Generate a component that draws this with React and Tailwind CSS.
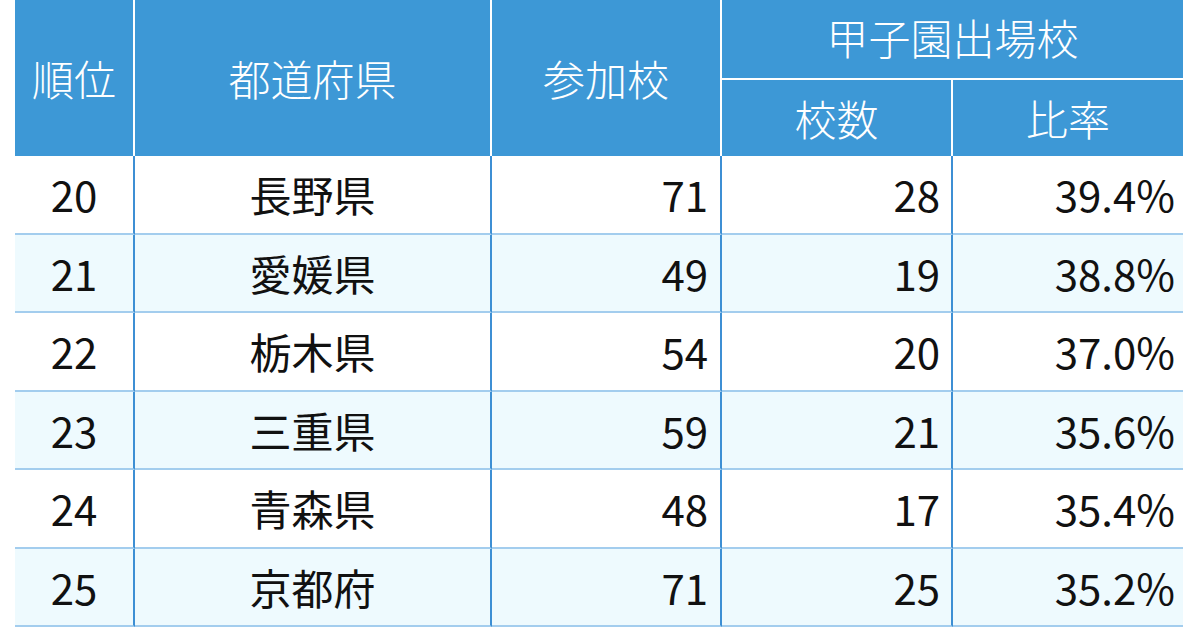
import React from "react";

const rows = [
  ["20", "長野県", "71", "28", "39.4%"],
  ["21", "愛媛県", "49", "19", "38.8%"],
  ["22", "栃木県", "54", "20", "37.0%"],
  ["23", "三重県", "59", "21", "35.6%"],
  ["24", "青森県", "48", "17", "35.4%"],
  ["25", "京都府", "71", "25", "35.2%"],
];

const App = () => {
  return (
    <div
      className="w-[1200px] h-[630px] bg-white overflow-hidden pl-[15px]"
      style={{ fontFamily: '"Noto Sans CJK JP", "Noto Sans", sans-serif' }}
    >
      <table className="table-fixed w-[1168px] border-separate border-spacing-0 text-[42px] leading-none">
        <colgroup>
          <col className="w-[120px]" />
          <col className="w-[357px]" />
          <col className="w-[230px]" />
          <col className="w-[231px]" />
          <col className="w-[230px]" />
        </colgroup>
        <thead className="bg-[#3d98d6] text-white">
          <tr className="h-[80px]">
            <th rowSpan={2} className="font-light border-r-2 border-white">順位</th>
            <th rowSpan={2} className="font-light border-r-2 border-white">都道府県</th>
            <th rowSpan={2} className="font-light border-r-2 border-white">参加校</th>
            <th colSpan={2} className="font-light border-b-2 border-white pb-1">甲子園出場校</th>
          </tr>
          <tr className="h-[76px]">
            <th className="font-light border-r-2 border-white">校数</th>
            <th className="font-light">比率</th>
          </tr>
        </thead>
        <tbody className="text-[#111] font-normal">
          {rows.map((r, i) => (
            <tr key={r[0]} className={i % 2 === 0 ? "h-[78.5px] bg-white" : "h-[78.5px] bg-[#eefafe]"}>
              <td className="text-center border-r-2 border-r-[#3d8fd4] border-b-2 border-b-[#a3cdee]">{r[0]}</td>
              <td className="text-center border-r-2 border-r-[#3d8fd4] border-b-2 border-b-[#a3cdee]">{r[1]}</td>
              <td className="text-right pr-[12px] border-r-2 border-r-[#3d8fd4] border-b-2 border-b-[#a3cdee]">{r[2]}</td>
              <td className="text-right pr-[11px] border-r-2 border-r-[#3d8fd4] border-b-2 border-b-[#a3cdee]">{r[3]}</td>
              <td className="text-right pr-[8px] border-b-2 border-b-[#a3cdee]">{r[4]}</td>
            </tr>
          ))}
        </tbody>
      </table>
    </div>
  );
};

export default App;
